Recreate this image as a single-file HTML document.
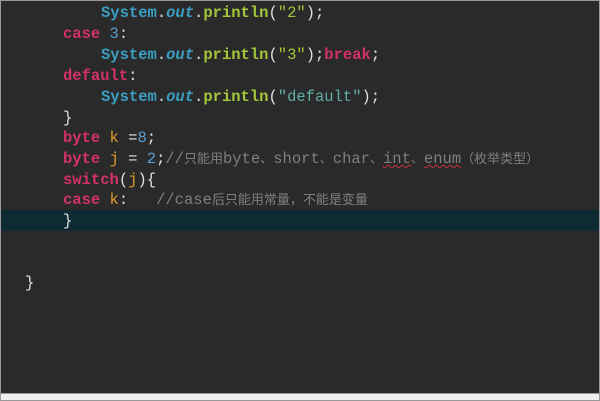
<!DOCTYPE html>
<html><head><meta charset="utf-8"><style>
html,body{margin:0;padding:0;}
body{width:600px;height:401px;position:relative;overflow:hidden;background:#efefef;}
.ed{position:absolute;left:0;top:0;width:598px;height:392px;background:#2a2a2a;border:1px solid #999;}
.hl{position:absolute;left:0;top:209px;width:598px;height:21px;background:#0e2a33;}
.bot{position:absolute;left:0;top:394px;width:598px;height:6px;border:1px solid #999;border-top:none;background:#efefef;}
.l{position:absolute;white-space:pre;font-family:"Liberation Mono",monospace;font-size:15.5px;line-height:21px;height:21px;color:#e0e0e0;}
.k{color:#d23268;font-weight:bold}
.s{color:#3b9ec3;font-weight:bold}
.o{color:#3b9ec3;font-style:italic;font-weight:bold}
.p{color:#a3c63a;font-weight:bold}
.st{color:#a3c63a}
.st2{color:#5fb0a6}
.n{color:#5a9fd0}
.v{color:#e09b2c}
.c{color:#7f7f7f}
.cj{font-family:"Noto Sans CJK SC",sans-serif;font-size:13px;line-height:13px;}
.u{text-decoration:underline wavy #c33;text-decoration-thickness:1px}
</style></head><body>
<div class="ed">
<div class="hl"></div>
<div class="l" style="left:100px;top:2px"><span class="s">System</span>.<span class="o">out</span>.<span class="p">println</span>(<span class="st">"2"</span>);</div>
<div class="l" style="left:62px;top:23px"><span class="k">case</span> <span class="n">3</span>:</div>
<div class="l" style="left:100px;top:44px"><span class="s">System</span>.<span class="o">out</span>.<span class="p">println</span>(<span class="st">"3"</span>);<span class="k">break</span>;</div>
<div class="l" style="left:62px;top:65px"><span class="k">default</span>:</div>
<div class="l" style="left:100px;top:86px"><span class="s">System</span>.<span class="o">out</span>.<span class="p">println</span>(<span class="st2">"default"</span>);</div>
<div class="l" style="left:62px;top:107px">}</div>
<div class="l" style="left:62px;top:127px"><span class="k">byte</span> <span class="v">k</span> =<span class="n">8</span>;</div>
<div class="l" style="left:62px;top:148px"><span class="k">byte</span> <span class="v">j</span> = <span class="n">2</span>;<span class="c">//<span class="cj">只能用</span>byte<span class="cj">、</span>short<span class="cj">、</span>char<span class="cj">、</span><span class="u">int</span><span class="cj">、</span><span class="u">enum</span><span class="cj">（枚举类型）</span></span></div>
<div class="l" style="left:62px;top:169px"><span class="k">switch</span>(<span class="v">j</span>){</div>
<div class="l" style="left:62px;top:189px"><span class="k">case</span> <span class="v">k</span>:   <span class="c">//case<span class="cj">后只能用常量，不能是变量</span></span></div>
<div class="l" style="left:62px;top:210px">}</div>
<div class="l" style="left:24px;top:272px">}</div>
</div>
<div class="bot"></div>
</body></html>
